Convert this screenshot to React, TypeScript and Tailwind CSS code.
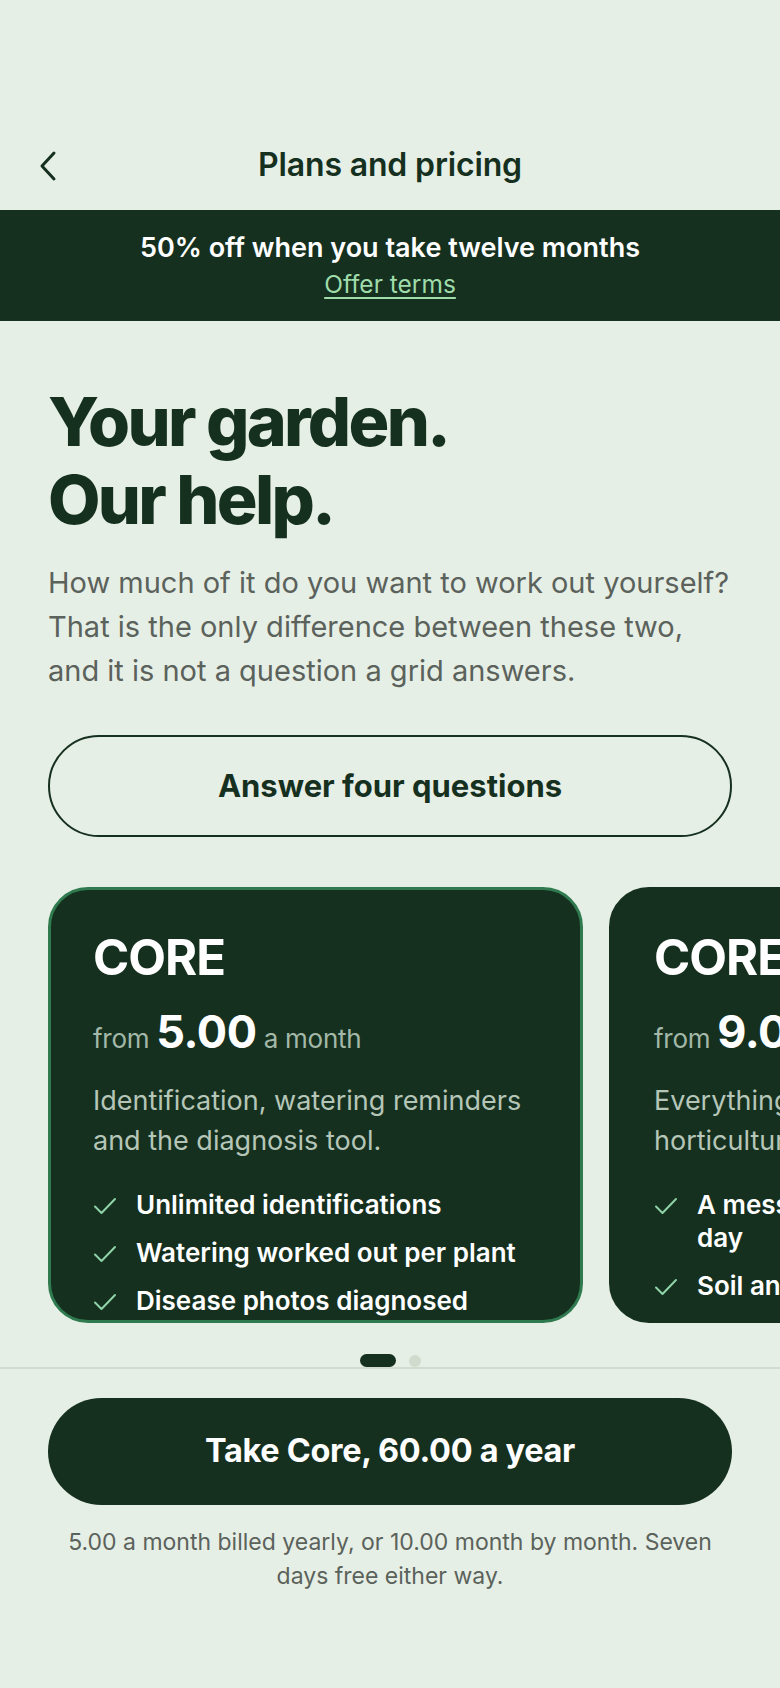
import React from 'react'

type Plan = {
  name: string
  price: string
  blurb: string
  features: string[]
  selected?: boolean
}

const plans: Plan[] = [
  {
    name: 'CORE',
    price: '5.00',
    blurb: 'Identification, watering reminders and the diagnosis tool.',
    features: ['Unlimited identifications', 'Watering worked out per plant', 'Disease photos diagnosed'],
    selected: true,
  },
  {
    name: 'CORE PLUS',
    price: '9.00',
    blurb: 'Everything in Core, plus a real horticulturist on call.',
    features: ['A message answered within the day', 'Soil and pest advice'],
  },
]

function Check() {
  return (
    <svg width="24" height="18" viewBox="0 0 24 18" fill="none" className="shrink-0 mt-[9px]">
      <path d="M2 9.5 L8.5 16 L22 2" stroke="#8fd3a6" strokeWidth="2" strokeLinecap="round" strokeLinejoin="round" />
    </svg>
  )
}

function PlanCard({ plan }: { plan: Plan }) {
  return (
    <div
      className={`shrink-0 w-[535px] h-[436px] overflow-hidden rounded-[40px] border-[3px] bg-[#16301f] px-[42px] pt-[44px] ${
        plan.selected ? 'border-[#2f7a4f]' : 'border-[#16301f]'
      }`}
    >
      <div className="text-[49px] leading-[48px] font-bold tracking-[-0.02em] text-white whitespace-nowrap">{plan.name}</div>
      <div className="mt-[26px] flex items-baseline gap-[7px] whitespace-nowrap">
        <span className="text-[26px] text-[#a3b8a8] tracking-[-0.01em]">from</span>
        <span className="text-[45px] leading-[48px] font-bold text-white tracking-[-0.01em]">{plan.price}</span>
        <span className="text-[26px] text-[#a3b8a8] tracking-[-0.01em]">a month</span>
      </div>
      <p className="mt-[23px] text-[27px] leading-[40px] text-[#b5c6b8]">{plan.blurb}</p>
      <ul className="mt-[27px] flex flex-col gap-[15px]">
        {plan.features.map(f => (
          <li key={f} className="flex gap-[19px] text-[26px] leading-[33px] font-semibold text-white">
            <Check />
            <span>{f}</span>
          </li>
        ))}
      </ul>
    </div>
  )
}

export default function App() {
  return (
    <div className="min-h-[1688px] bg-[#e6efe5] font-['Inter','Noto_Sans',sans-serif] text-[#16301f]">
      {/* Header */}
      <div className="pt-[130px] pb-[10px]">
        <div className="relative h-[70px] flex items-center justify-center">
          <button type="button" className="absolute left-[38px] top-[20px] p-0">
            <svg width="20" height="32" viewBox="0 0 20 32" fill="none">
              <path d="M16 3 L4 16 L16 29" stroke="#16301f" strokeWidth="3" strokeLinecap="round" strokeLinejoin="round" />
            </svg>
          </button>
          <h1 className="text-[32px] font-semibold tracking-[-0.005em]">Plans and pricing</h1>
        </div>
      </div>

      {/* Offer banner */}
      <div className="h-[111px] bg-[#16301f] flex flex-col items-center justify-center text-center">
        <div className="text-[27px] leading-[36px] font-semibold text-white">50% off when you take twelve months</div>
        <a className="text-[24.5px] leading-[36px] text-[#9fdcaa] underline underline-offset-[4px] decoration-[2px]">Offer terms</a>
      </div>

      {/* Intro */}
      <div className="px-[48px] pt-[61px]">
        <h2 className="text-[68px] leading-[78px] font-extrabold tracking-[-0.04em]">
          Your garden.
          <br />
          Our help.
        </h2>
        <p className="mt-[23px] text-[29px] leading-[44px] text-[#5b625c]">
          How much of it do you want to work out yourself? That is the only difference between these two, and it is not a
          question a grid answers.
        </p>
        <button
          type="button"
          className="mt-[42px] w-full h-[102px] rounded-full border-2 border-[#16301f] text-[31px] font-bold text-[#16301f]"
        >
          Answer four questions
        </button>
      </div>

      {/* Plan carousel */}
      <div className="mt-[50px] overflow-hidden">
        <div className="flex gap-[26px] pl-[48px]">
          {plans.map(p => (
            <PlanCard key={p.name} plan={p} />
          ))}
        </div>
      </div>

      <div className="mt-[31px] flex justify-center items-center gap-[13px]">
        <span className="w-[36px] h-[13px] rounded-full bg-[#16301f]" />
        <span className="w-[12px] h-[12px] rounded-full bg-[#cfdbcd]" />
      </div>

      {/* Footer */}
      <div className="border-t-2 border-[#d2dbd0] px-[48px] pt-[29px]">
        <button type="button" className="w-full h-[107px] rounded-full bg-[#16301f] text-white text-[32.5px] font-bold tracking-[-0.01em]">
          Take Core, 60.00 a year
        </button>
        <p className="mt-[20px] text-center text-[23px] leading-[34px] text-[#5b625c]">
          5.00 a month billed yearly, or 10.00 month by month. Seven days free either way.
        </p>
      </div>
    </div>
  )
}
